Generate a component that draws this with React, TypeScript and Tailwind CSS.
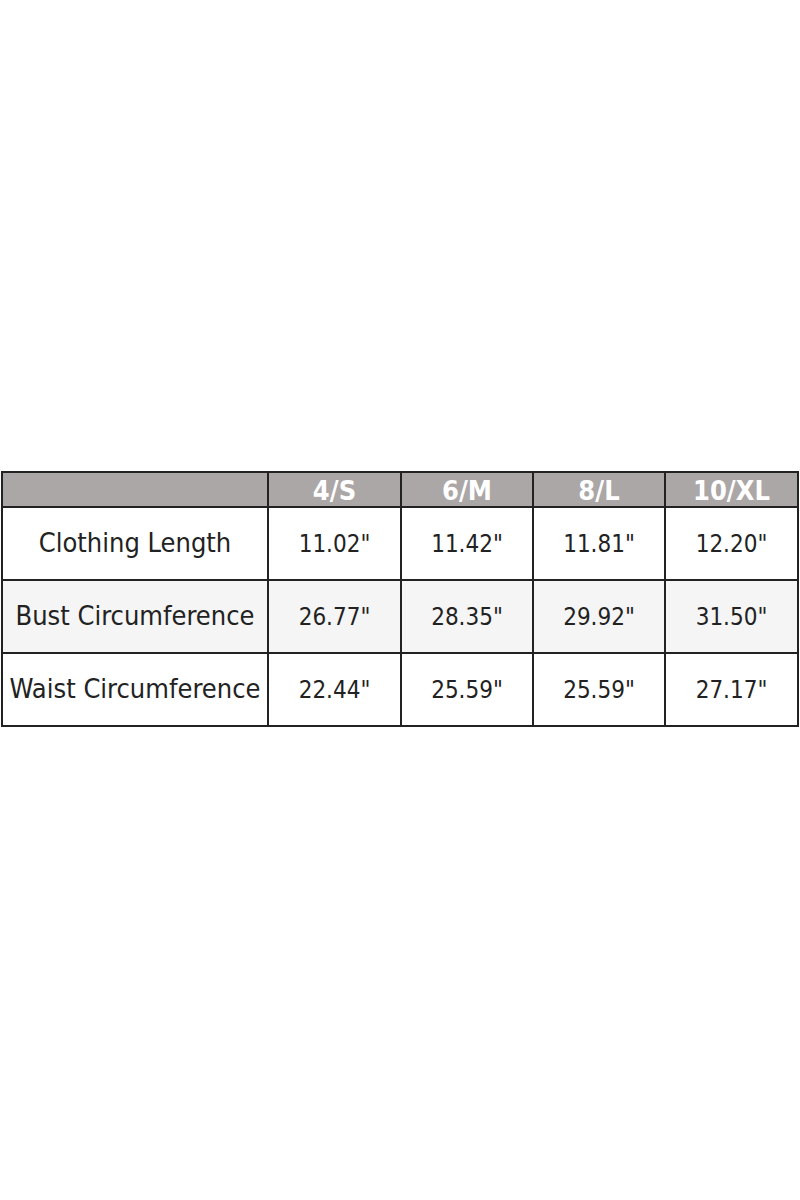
import React from 'react';

const sizes = ['4/S', '6/M', '8/L', '10/XL'];

const rows = [
  { label: 'Clothing Length', values: ['11.02"', '11.42"', '11.81"', '12.20"'], shade: false },
  { label: 'Bust Circumference', values: ['26.77"', '28.35"', '29.92"', '31.50"'], shade: true },
  { label: 'Waist Circumference', values: ['22.44"', '25.59"', '25.59"', '27.17"'], shade: false },
];

const App: React.FC = () => {
  return (
    <div className="w-[800px] h-[1200px] bg-white pt-[471px]" style={{ fontFamily: '"DejaVu Sans Condensed", "DejaVu Sans", sans-serif' }}>
      <table className="ml-px w-[797px] border-collapse table-fixed text-[#222]">
        <colgroup>
          <col className="w-[266px]" />
          <col className="w-[133px]" />
          <col className="w-[132px]" />
          <col className="w-[132px]" />
          <col className="w-[133px]" />
        </colgroup>
        <thead>
          <tr className="h-[35px] bg-[#aca7a7]">
            <th className="border-2 border-[#222]"></th>
            {sizes.map(s => (
              <th key={s} className="border-2 border-[#222] text-white text-[27px] font-bold leading-none pt-px">{s}</th>
            ))}
          </tr>
        </thead>
        <tbody>
          {rows.map(r => (
            <tr key={r.label} className={`h-[73px] ${r.shade ? 'bg-[#f5f5f5]' : 'bg-white'}`}>
              <td className="border-2 border-[#222] text-center text-[27px] whitespace-nowrap">{r.label}</td>
              {r.values.map((v, i) => (
                <td key={i} className="border-2 border-[#222] text-center text-[24px]">{v}</td>
              ))}
            </tr>
          ))}
        </tbody>
      </table>
    </div>
  );
};

export default App;
